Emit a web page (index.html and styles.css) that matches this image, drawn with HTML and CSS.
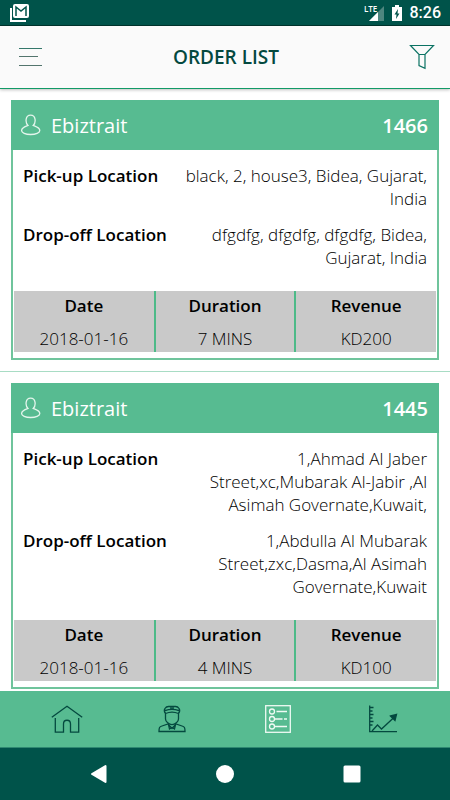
FILE: index.html
```html
<!DOCTYPE html>
<html lang="en">
<head>
<meta charset="utf-8">
<meta name="viewport" content="width=device-width, initial-scale=1">
<title>Order List</title>
<link rel="stylesheet" href="styles.css">
</head>
<body>
<div class="status">
  <svg class="status-mail" width="20" height="18" viewBox="0 0 20 18" aria-hidden="true">
    <path d="M1 4v13h15" fill="none" stroke="#fff" stroke-width="2"/>
    <rect x="3" y="0" width="16" height="14" rx="2" fill="#fff"/>
    <path d="M6 12V3l5 4 5-4v9" fill="none" stroke="#00534a" stroke-width="1.5"/>
  </svg>
  <div class="status-right">
    <svg width="20" height="17" viewBox="0 0 20 17" aria-hidden="true">
      <path d="M20 1v15H5z" fill="#4e867f"/>
      <path d="M14 7v9H5z" fill="#fff"/>
      <text class="lte" x="0" y="7">LTE</text>
    </svg>
    <svg width="10" height="16" viewBox="0 0 10 16" aria-hidden="true">
      <path d="M0 2h3V0h4v2h3v14H0z" fill="#fff"/>
      <path d="M6 4 2.500 9.500h2L4 14l3.500-5.500h-2z" fill="#00534a"/>
    </svg>
    <span class="clock">8:26</span>
  </div>
</div>

<header class="topbar">
  <button class="icon-btn" aria-label="Menu">
    <svg width="24" height="20" viewBox="0 0 24 20" aria-hidden="true">
      <path d="M0 1.500h23" stroke="#35786b"/>
      <path d="M0 9.500h19M0 18.500h23" stroke="#53756d"/>
    </svg>
  </button>
  <h1>ORDER LIST</h1>
  <button class="icon-btn" aria-label="Filter">
    <svg width="26" height="26" viewBox="0 0 26 26" fill="none" stroke="#0b7263" stroke-width="1.200" aria-hidden="true">
      <path d="M1.500 1.500h23L16 10.500h-6zM10 10.500v11l6 2.800V10.500"/>
    </svg>
  </button>
</header>

<main class="orders">
  <article class="order">
    <div class="order-head">
      <svg width="20" height="22" viewBox="0 0 20 22" fill="none" stroke="#e4f5ec" stroke-width="1.300" aria-hidden="true">
        <path d="M7 11.500C4 8.500 4.300 1.200 9.600 1.200s5.600 7.300 2.600 10.300c2.500 1 6.600 2 6.600 5 0 2.300-4 4-9.200 4s-9-1.700-9-4c0-3 4-4 6.400-5z"/>
      </svg>
      <h2>Ebiztrait</h2>
      <span class="order-no">1466</span>
    </div>
    <dl class="places">
      <div><dt>Pick-up Location</dt><dd>black, 2, house3, Bidea, Gujarat, India</dd></div>
      <div><dt>Drop-off Location</dt><dd>dfgdfg, dfgdfg, dfgdfg, Bidea, Gujarat, India</dd></div>
    </dl>
    <table class="facts">
      <thead><tr><th>Date</th><th>Duration</th><th>Revenue</th></tr></thead>
      <tbody><tr><td>2018-01-16</td><td>7 MINS</td><td>KD200</td></tr></tbody>
    </table>
  </article>
  <hr>
  <article class="order">
    <div class="order-head">
      <svg width="20" height="22" viewBox="0 0 20 22" fill="none" stroke="#e4f5ec" stroke-width="1.300" aria-hidden="true">
        <path d="M7 11.500C4 8.500 4.300 1.200 9.600 1.200s5.600 7.300 2.600 10.300c2.500 1 6.600 2 6.600 5 0 2.300-4 4-9.200 4s-9-1.700-9-4c0-3 4-4 6.400-5z"/>
      </svg>
      <h2>Ebiztrait</h2>
      <span class="order-no">1445</span>
    </div>
    <dl class="places">
      <div><dt>Pick-up Location</dt><dd>1,Ahmad Al Jaber Street,xc,Mubarak Al-Jabir ,Al Asimah Governate,Kuwait,</dd></div>
      <div><dt>Drop-off Location</dt><dd>1,Abdulla Al Mubarak Street,zxc,Dasma,Al Asimah Governate,Kuwait</dd></div>
    </dl>
    <table class="facts">
      <thead><tr><th>Date</th><th>Duration</th><th>Revenue</th></tr></thead>
      <tbody><tr><td>2018-01-16</td><td>4 MINS</td><td>KD100</td></tr></tbody>
    </table>
  </article>
</main>

<nav class="tabs" aria-label="Sections">
  <a href="#home" aria-label="Home">
    <svg width="32" height="30" viewBox="0 0 32 30" aria-hidden="true">
      <path d="M.8 13.300 16 2.200l15.200 11.100M4.300 14v14.200h8.200V20c0-5 7-5 7 0v8.200h8.200V14"/>
    </svg>
  </a>
  <a href="#drivers" aria-label="Drivers">
    <svg width="28" height="30" viewBox="0 0 28 30" aria-hidden="true">
      <path d="M7.500 9.500C4.500 5.500 8 2.500 10.500 2.500h7c2.500 0 6 3 3 7M7.500 9.500c4-1.800 9-1.800 13 0M7 6.700c4-1.500 10-1.500 14 0M13 2.500v3.200M15 2.500v3.200M7.500 9.500V15c0 2.500 3.500 5.700 6.500 5.700s6.500-3.200 6.500-5.700V9.500"/>
      <path d="M1 27.500c0-4 .5-4.700 3-5.500l6-2 4 4.500 4-4.500 6 2c2.500.8 3 1.500 3 5.500zM10.500 20.500l1 4.500 2.500-1.500 2.500 1.500 1-4.500"/>
    </svg>
  </a>
  <a class="active" href="#orders" aria-label="Orders" aria-current="page">
    <svg width="26" height="30" viewBox="0 0 26 30" aria-hidden="true">
      <rect x=".7" y="1.700" width="24.600" height="26.600"/>
      <circle cx="7" cy="7.500" r="2.500"/><circle cx="7" cy="15" r="2.500"/><circle cx="7" cy="22.500" r="2.500"/>
      <path d="M11.500 7.500H22M9.500 15h8M19 15h3M9.500 22.500H22"/>
    </svg>
  </a>
  <a href="#reports" aria-label="Reports">
    <svg width="30" height="30" viewBox="0 0 30 30" aria-hidden="true">
      <path d="M1.700 1.500v26.200H29M2 3.500h3.500M2 7h2.500M2 10.500h3.500M2 14h2.500M2 17.500h3.500M2 21h2.500M4 27l5.500-6 4 4L27 12.500"/>
      <path d="m22.500 12 6-1.500-1.500 6z" fill="currentColor"/>
    </svg>
  </a>
</nav>

<div class="system">
  <button aria-label="Back"><svg width="18" height="20" viewBox="0 0 18 20"><path d="M16.500 2v16L3 10z" fill="#fff" stroke="#fff" stroke-width="2" stroke-linejoin="round"/></svg></button>
  <button aria-label="Home screen"><svg width="18" height="18" viewBox="0 0 18 18"><circle cx="9" cy="9" r="9" fill="#fff"/></svg></button>
  <button aria-label="Recent apps"><svg width="18" height="18" viewBox="0 0 18 18"><rect width="17" height="17" x=".5" y=".5" rx="1.500" fill="#fff"/></svg></button>
</div>
</body>
</html>
```
FILE: styles.css
```css
* {
  box-sizing: border-box;
}

body {
  margin: 0;
  height: 100vh;
  display: flex;
  flex-direction: column;
  overflow: hidden;
  background: #fff;
  color: #000;
  font-family: "Open Sans", sans-serif;
  font-size: 17px;
  line-height: 23px;
}

button {
  padding: 0;
  border: 0;
  background: none;
}

svg {
  display: block;
  flex: none;
}

h1,
h2,
dl,
dd {
  margin: 0;
}

.status {
  flex: none;
  height: 26px;
  padding: 1px 9px 0 10px;
  display: flex;
  align-items: center;
  justify-content: space-between;
  background: #00534a;
  border-bottom: 1px solid #00352d;
  color: #fff;
}

.status-right {
  display: flex;
  align-items: center;
  gap: 8px;
}

.status-right svg {
  overflow: visible;
}

.lte {
  fill: #fff;
  font-family: "Open Sans", sans-serif;
  font-size: 8px;
  font-weight: 600;
}

.clock {
  font-family: Roboto, sans-serif;
  font-size: 16px;
  font-weight: 500;
  line-height: 24px;
}

.topbar {
  flex: none;
  height: 63px;
  padding: 0 15px 0 19px;
  display: flex;
  align-items: center;
  justify-content: space-between;
  background: #fafafa;
  border-bottom: 1px solid #119a66;
  box-shadow: 0 1px 3px rgba(0, 0, 0, 0.25);
}

.topbar h1 {
  font-size: 19px;
  font-weight: 600;
  color: #04493f;
}

.orders {
  flex: 1;
  min-height: 0;
  padding-top: 11px;
  overflow: hidden;
}

.order {
  margin: 0 11px;
  padding-bottom: 6px;
  border: 2px solid #6fc49c;
  border-top: 0;
}

.order-head {
  height: 50px;
  margin: 0 -2px;
  padding: 0 11px 0 10px;
  display: flex;
  align-items: center;
  gap: 10px;
  background: #57bb91;
  color: #fff;
  font-size: 20px;
}

.order-head h2 {
  flex: 1;
  font-size: 20px;
  font-weight: 400;
}

.order-no {
  font-weight: 600;
}

.places {
  padding: 14px 10px 22px 10px;
  display: grid;
  gap: 13px;
}

.places div {
  display: flex;
  justify-content: space-between;
  gap: 16px;
}

.places dt {
  flex: none;
  font-weight: 600;
}

.places dd {
  max-width: 250px;
  font-weight: 300;
  text-align: right;
}

.facts {
  width: calc(100% - 2px);
  margin: 0 1px;
  border-collapse: collapse;
  table-layout: fixed;
  background: #c9c9c9;
  text-align: center;
}

.facts th,
.facts td {
  padding: 3px 0 5px;
}

.facts th {
  font-weight: 600;
}

.facts td {
  padding: 5px 0 2px;
  font-weight: 300;
}

.facts th + th,
.facts td + td {
  border-left: 2px solid #4dba88;
}

hr {
  height: 1px;
  margin: 11px 0;
  border: 0;
  background: #a8dcc4;
}

.tabs {
  flex: none;
  height: 57px;
  padding: 0 14px;
  display: grid;
  grid-template-columns: repeat(4, 1fr);
  background: #57bb91;
  border-bottom: 1px solid #2f8871;
}

.tabs a {
  display: flex;
  align-items: center;
  justify-content: center;
  color: #04493f;
}

.tabs svg {
  fill: none;
  stroke: currentColor;
  stroke-width: 1.3px;
}

.tabs .active {
  color: #effaf4;
}

.system {
  flex: none;
  height: 52px;
  padding: 0 35px;
  display: grid;
  grid-template-columns: repeat(3, 1fr);
  background: #00534a;
}

.system button {
  display: flex;
  align-items: center;
  justify-content: center;
}
```
